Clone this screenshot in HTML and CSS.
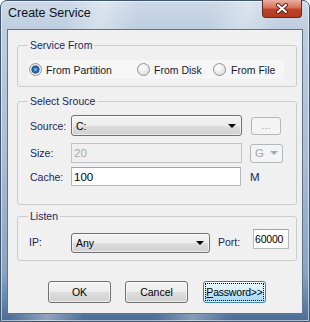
FILE: index.html
```html
<!DOCTYPE html>
<html>
<head>
<meta charset="utf-8">
<title>Create Service</title>
<link rel="stylesheet" href="styles.css">
</head>
<body>
<div class="window">
  <div class="titlebar">
    <span class="title">Create Service</span>
    <div class="close">
      <svg width="16" height="11" viewBox="0 0 16 11">
        <path d="M4 2 L12 9 M12 2 L4 9" stroke="#5a1a10" stroke-width="4" stroke-linecap="round"/>
        <path d="M4 2 L12 9 M12 2 L4 9" stroke="#ffffff" stroke-width="2.2" stroke-linecap="round"/>
      </svg>
    </div>
  </div>

  <div class="client">
    <div class="group g-from">
      <span class="caption">Service From</span>
      <div class="radios">
        <label class="radio r-part"><span class="dot on"></span>From Partition</label>
        <label class="radio r-disk"><span class="dot"></span>From Disk</label>
        <label class="radio r-file"><span class="dot"></span>From File</label>
      </div>
    </div>

    <div class="group g-source">
      <span class="caption">Select Srouce</span>
      <div class="row row-source">
        <span class="lbl">Source:</span>
        <div class="combo w-field">C:<span class="arrow"></span></div>
        <div class="browse">...</div>
      </div>
      <div class="row row-size">
        <span class="lbl">Size:</span>
        <div class="edit off w-field">20</div>
        <div class="combo-off">G<span class="arrow grey"></span></div>
      </div>
      <div class="row row-cache">
        <span class="lbl">Cache:</span>
        <div class="edit w-cache">100</div>
        <span class="unit">M</span>
      </div>
    </div>

    <div class="group g-listen">
      <span class="caption">Listen</span>
      <div class="row row-ip">
        <span class="lbl lbl-ip">IP:</span>
        <div class="combo w-ip">Any<span class="arrow"></span></div>
        <span class="lbl-port">Port:</span>
        <div class="edit w-port">60000</div>
      </div>
    </div>

    <div class="buttons">
      <div class="btn">OK</div>
      <div class="btn">Cancel</div>
      <div class="btn default"><u>P</u>assword&gt;&gt;</div>
    </div>
  </div>
</div>
</body>
</html>
```

FILE: styles.css
```css
body {
  margin: 0;
  font-family: "Liberation Sans", Tahoma, sans-serif;
  font-size: 10.5px;
  color: #22265a;
}

.window {
  width: 310px;
  height: 322px;
  box-sizing: border-box;
  border: 1px solid #3f5570;
  border-radius: 7px 7px 0 0;
  display: flex;
  flex-direction: column;
  background:
    linear-gradient(100deg, rgba(255,255,255,0) 18%, rgba(255,255,255,0.35) 28%, rgba(255,255,255,0) 38%,
      rgba(255,255,255,0) 58%, rgba(255,255,255,0.3) 68%, rgba(255,255,255,0) 78%),
    linear-gradient(to bottom, #cdd9e7 0, #bccddf 10%, #a9bdd3 50%, #8aa3c1 85%, #4d6d97 100%);
  box-shadow: inset 0 0 0 1px rgba(255,255,255,0.55);
}

/* title bar */
.titlebar {
  height: 28px;
  display: flex;
  align-items: flex-start;
}

.title {
  padding: 4px 0 0 7px;
  font-size: 12.5px;
  line-height: 16px;
  color: #111;
}

.close {
  margin-left: auto;
  margin-right: 7px;
  margin-top: -1px;
  width: 40px;
  height: 18px;
  box-sizing: border-box;
  border: 1px solid #5e2a22;
  border-top: none;
  border-radius: 0 0 4px 4px;
  background: linear-gradient(to bottom, #eab0a2 0, #d8705a 45%, #c0432b 55%, #b23a22 100%);
  display: flex;
  align-items: center;
  justify-content: center;
}

/* client area */
.client {
  margin: 0 6px;
  height: 285px;
  box-sizing: border-box;
  border: 1px solid #5d7491;
  background: #f0f0f0;
}

.group {
  position: relative;
  margin-left: 9px;
  width: 280px;
  box-sizing: border-box;
  border: 1px solid #c9cdd0;
  border-radius: 3px;
}

.caption {
  position: absolute;
  top: -7px;
  left: 10px;
  padding: 0 2px;
  line-height: 13px;
  background: #f0f0f0;
}

.g-from {
  margin-top: 15px;
  height: 42px;
  padding-top: 14px;
}

.g-source {
  margin-top: 14px;
  height: 104px;
  padding: 13px 0 0 12px;
}

.g-listen {
  margin-top: 11px;
  height: 45px;
  padding: 14px 0 0 11px;
}

/* radio buttons */
.radios {
  margin-left: 10px;
  width: 256px;
  height: 19px;
  padding-left: 1px;
  box-sizing: border-box;
  background: #f6f6f6;
  display: flex;
  align-items: center;
  color: #1a1a2a;
}

.radio {
  display: flex;
  align-items: center;
  gap: 4px;
}

.r-part { width: 108px; }
.r-disk { width: 76px; }
.r-file { gap: 5px; }

.dot {
  width: 13px;
  height: 13px;
  box-sizing: border-box;
  border-radius: 50%;
  border: 1px solid #929598;
  background: radial-gradient(circle at 40% 35%, #ffffff 0, #f0f0f0 40%, #d2d2d2 100%);
}

.dot.on {
  background: radial-gradient(circle at 50% 50%, #8fd0f7 0, #2f77c0 2px, #1a4a86 3.5px, #e4e4e4 4.5px, #fafafa 6px);
}

/* rows with fields */
.row {
  display: flex;
  align-items: center;
}

.lbl { width: 41px; }
.lbl-ip { width: 42px; }

.row-source { height: 21px; }
.row-size { height: 20px; margin-top: 7px; }
.row-cache { height: 19px; margin-top: 4px; }
.row-ip { height: 21px; }

.w-field { width: 171px; }
.w-cache { width: 170px; }
.w-ip { width: 139px; }
.w-port { width: 36px; }

.combo {
  height: 21px;
  box-sizing: border-box;
  border: 1px solid #707070;
  border-radius: 3px;
  padding-left: 4px;
  display: flex;
  align-items: center;
  color: #000;
  background: linear-gradient(to bottom, #f4f4f4 0, #ececec 50%, #dedede 51%, #d0d0d0 100%);
  box-shadow: inset 0 0 0 1px rgba(255,255,255,0.6);
}

.row-ip .combo {
  height: 20px;
  margin-top: 2px;
}

.arrow {
  margin-left: auto;
  margin-right: 5px;
  width: 0;
  height: 0;
  border-left: 4px solid transparent;
  border-right: 4px solid transparent;
  border-top: 4px solid #000;
}

.arrow.grey {
  border-top-color: #a8a8a8;
  margin-right: 4px;
}

.browse {
  margin-left: 9px;
  width: 30px;
  height: 18px;
  box-sizing: border-box;
  border: 1px solid #b2b7ba;
  border-radius: 3px;
  background: #f4f4f4;
  color: #a3a3a3;
  text-align: center;
  line-height: 15px;
}

.combo-off {
  margin-left: 8px;
  width: 33px;
  height: 19px;
  box-sizing: border-box;
  border: 1px solid #b2b7ba;
  border-radius: 3px;
  background: #f4f4f4;
  color: #a3a3a3;
  padding-left: 4px;
  display: flex;
  align-items: center;
  font-size: 11.5px;
}

.edit {
  height: 100%;
  box-sizing: border-box;
  border: 1px solid #b7babf;
  border-top-color: #a0a3a8;
  background: #fff;
  color: #000;
  padding-left: 2px;
  display: flex;
  align-items: center;
  font-size: 11.5px;
}

.edit.off {
  background: #f0f0f0;
  color: #a8a8a8;
  border-color: #c2c4c7;
}

.row-ip .edit {
  height: 20px;
  align-self: flex-start;
  margin-top: -2px;
  padding-left: 1px;
  font-size: 10.5px;
  letter-spacing: -0.2px;
}

.unit {
  margin-left: 9px;
  font-size: 11.5px;
}

.lbl-port {
  margin-left: 8px;
  width: 35px;
}

/* buttons */
.buttons {
  margin-top: 20px;
  padding-left: 40px;
  display: flex;
}

.btn {
  width: 63px;
  height: 22px;
  box-sizing: border-box;
  border: 1px solid #707070;
  border-radius: 3px;
  margin-right: 14px;
  display: flex;
  align-items: center;
  justify-content: center;
  color: #000;
  background: linear-gradient(to bottom, #f4f4f4 0, #ececec 50%, #dedede 51%, #d0d0d0 100%);
  box-shadow: inset 0 0 0 1px rgba(255,255,255,0.65);
}

.btn.default {
  margin-left: 1px;
  border-color: #3c7fb1;
  letter-spacing: -0.2px;
  background: linear-gradient(to bottom, #eaf6fd 0, #d9f0fc 50%, #bee6fd 51%, #a7d9f5 100%);
  outline: 1px dotted #000;
  outline-offset: -3px;
}
```
